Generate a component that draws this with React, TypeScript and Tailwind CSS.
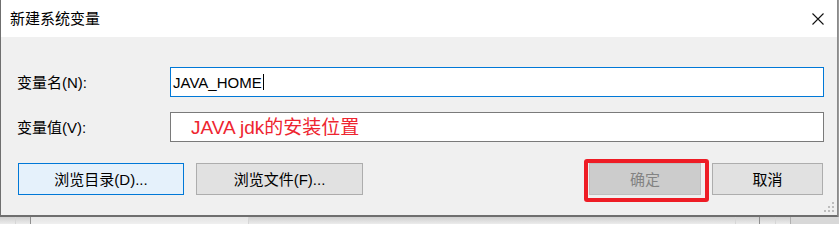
import React from "react";

const font = { fontFamily: '"Liberation Sans", "Noto Sans CJK SC", sans-serif' };

function Btn({ children, cls }: { children: React.ReactNode; cls: string }) {
  return (
    <div className={`h-[32px] flex items-center justify-center text-[15px] leading-none border ${cls}`}>
      {children}
    </div>
  );
}

export default function App() {
  return (
    <div className="w-[839px] h-[224px] overflow-hidden bg-[#e4e4e4] flex flex-col" style={font}>
      <div className="flex h-[217px] w-[839px]">
        {/* window */}
        <div className="w-[838px] h-[217px] flex flex-col border-l border-r border-b-2 border-l-[#6f6f6f] border-r-[#8a8a8a] border-b-[#6e6e6e] relative">
          {/* title bar */}
          <div className="h-[37px] bg-white flex items-center justify-between pl-[9px] pr-[13px] shrink-0">
            <span className="text-[15px] leading-none text-black">新建系统变量</span>
            <svg width="12" height="12" viewBox="0 0 12 12" className="block">
              <path d="M0.5 0.5 L11.5 11.5 M11.5 0.5 L0.5 11.5" stroke="#111" strokeWidth="1.1" fill="none" />
            </svg>
          </div>
          {/* body */}
          <div className="flex-1 bg-[#f0f0f0] flex flex-col relative">
            <div className="pt-[30px] pl-[16px] pr-[13px] flex flex-col gap-[15px]">
              <div className="flex items-center h-[30px]">
                <div className="w-[153px] text-[15px] leading-none text-black">变量名(N):</div>
                <div className="flex-1 h-[30px] border border-[#0078d7] bg-white flex items-center pl-[2px]">
                  <span className="text-[15px] leading-none text-black">JAVA_HOME</span>
                  <span className="w-[1px] h-[16px] bg-black ml-[1px]" />
                </div>
              </div>
              <div className="flex items-center h-[30px]">
                <div className="w-[153px] text-[15px] leading-none text-black">变量值(V):</div>
                <div className="flex-1 h-[30px] border border-[#7a7a7a] bg-white flex items-center pl-[20px]">
                  <span className="text-[19px] leading-none text-[#ee2530]">JAVA jdk的安装位置</span>
                </div>
              </div>
            </div>
            <div className="mt-[21px] pl-[17px] pr-[14px] flex items-center">
              <Btn cls="w-[166px] border-[#0078d7] bg-[#e5f1fb] text-black">浏览目录(D)...</Btn>
              <div className="w-[12px]" />
              <Btn cls="w-[167px] border-[#adadad] bg-[#e1e1e1] text-black">浏览文件(F)...</Btn>
              <div className="flex-1" />
              <div className="relative">
                <Btn cls="w-[112px] border-[#bfbfbf] bg-[#cccccc] text-[#838383]">确定</Btn>
                <div className="absolute left-[-5px] top-[-4px] w-[125px] h-[43px] border-4 border-[#ee1c25] rounded-[3px] pointer-events-none" />
              </div>
              <div className="w-[11px]" />
              <Btn cls="w-[111px] border-[#adadad] bg-[#e1e1e1] text-black">取消</Btn>
            </div>
            {/* resize grip */}
            <svg width="12" height="12" viewBox="0 0 12 12" className="absolute right-[1px] bottom-[1px]">
              <rect x="8" y="0" width="2" height="2" fill="#bdbdbd" />
              <rect x="4" y="4" width="2" height="2" fill="#bdbdbd" />
              <rect x="8" y="4" width="2" height="2" fill="#bdbdbd" />
              <rect x="0" y="8" width="2" height="2" fill="#bdbdbd" />
              <rect x="4" y="8" width="2" height="2" fill="#bdbdbd" />
              <rect x="8" y="8" width="2" height="2" fill="#bdbdbd" />
            </svg>
          </div>
        </div>
        <div className="flex-1 bg-[#9a9a9a]" />
      </div>
      {/* background strip behind the window */}
      <div className="h-[7px] flex bg-gradient-to-b from-[#cfcfcf] to-[#ececec]">
        <div className="w-[15px]" />
        <div className="w-[15px] border-l border-[#d6d6d6]" />
        <div className="w-[218px] border-l border-[#8f8f8f] bg-[#f2f2f2]/60" />
        <div className="w-[487px] border-l border-[#d6d6d6]" />
        <div className="w-[24px] border-l border-[#d6d6d6]" />
        <div className="w-[16px] border-l border-[#8f8f8f]" />
        <div className="w-[15px] border-l border-[#d6d6d6]" />
        <div className="flex-1 border-l border-[#b0b0b0] bg-[#d8d8d8]" />
      </div>
    </div>
  );
}
